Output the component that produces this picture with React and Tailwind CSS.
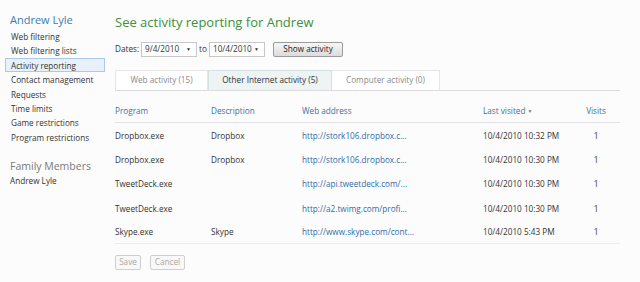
const navItems = [
  'Web filtering',
  'Web filtering lists',
  'Activity reporting',
  'Contact management',
  'Requests',
  'Time limits',
  'Game restrictions',
  'Program restrictions',
]

const rows = [
  { program: 'Dropbox.exe', desc: 'Dropbox', url: 'http://stork106.dropbox.c...', last: '10/4/2010 10:32 PM', visits: 1 },
  { program: 'Dropbox.exe', desc: 'Dropbox', url: 'http://stork106.dropbox.c...', last: '10/4/2010 10:30 PM', visits: 1 },
  { program: 'TweetDeck.exe', desc: '', url: 'http://api.tweetdeck.com/...', last: '10/4/2010 10:30 PM', visits: 1 },
  { program: 'TweetDeck.exe', desc: '', url: 'http://a2.twimg.com/profi...', last: '10/4/2010 10:30 PM', visits: 1 },
  { program: 'Skype.exe', desc: 'Skype', url: 'http://www.skype.com/cont...', last: '10/4/2010 5:43 PM', visits: 1 },
]

function DateSelect({ value, width }) {
  return (
    <div className={`flex items-center justify-between h-[15px] border border-[#c8c8c8] bg-white pl-[3px] pr-[5px] ${width}`}>
      <span>{value}</span>
      <span className="text-[5px] text-[#333]">▼</span>
    </div>
  )
}

export default function App() {
  return (
    <div className="w-[640px] h-[282px] bg-[#fcfcfc] flex text-[8.2px] text-[#333] font-['Open_Sans',sans-serif] overflow-hidden">
      <aside className="w-[105px] shrink-0 pl-[5px] pt-[12px]">
        <div className="text-[11px] text-[#3b7bb5] pl-[5px] leading-[16px]">Andrew Lyle</div>
        <ul className="mt-[1px]">
          {navItems.map((item) => (
            <li key={item}
              className={`h-[14.4px] leading-[13px] pl-[5px] border ${
                item === 'Activity reporting' ? 'bg-[#e8f1fb] border-[#a9c9ea]' : 'border-transparent'
              }`}>
              {item}
            </li>
          ))}
        </ul>
        <div className="mt-[14px] pl-[5px] text-[10.5px] text-[#7a7a7a] leading-[16px]">Family Members</div>
        <div className="mt-[1px] pl-[5px]">Andrew Lyle</div>
      </aside>

      <main className="flex-1 pl-[10px] pt-[12px] pr-[20px]">
        <h1 className="text-[13px] text-[#3f8f3c] leading-[20px]">See activity reporting for Andrew</h1>

        <div className="mt-[10px] flex items-center h-[15px]">
          <span className="w-[26px]">Dates:</span>
          <DateSelect value="9/4/2010" width="w-[56px]" />
          <span className="w-[12px] text-center">to</span>
          <DateSelect value="10/4/2010" width="w-[56px]" />
          <button className="ml-[8px] w-[70px] h-[15px] border border-[#9a9a9a] rounded-[2px] bg-gradient-to-b from-[#f6f6f6] to-[#dcdcdc] text-[#222]">
            Show activity
          </button>
        </div>

        <div className="mt-[13px] flex h-[21px] border-b border-[#dcdcdc]">
          <div className="w-[93px] border border-b-0 border-[#e6e6e6] bg-white flex items-center justify-center text-[#8a8a8a]">Web activity (15)</div>
          <div className="w-[124px] border border-b-0 border-[#d6e0e0] bg-[#eef4f4] flex items-center justify-center text-[#333]">Other Internet activity (5)</div>
          <div className="w-[108px] border border-b-0 border-l-0 border-[#e6e6e6] bg-white flex items-center justify-center text-[#8a8a8a]">Computer activity (0)</div>
        </div>

        <div className="mt-[10px]">
          <div className="flex h-[22px] items-center border-b border-[#e2e2e2] text-[#3d70a6]">
            <div className="w-[96px]">Program</div>
            <div className="w-[91px]">Description</div>
            <div className="w-[181px]">Web address</div>
            <div className="w-[102px]">Last visited <span className="text-[5px] text-[#777] align-middle">▼</span></div>
            <div className="w-[22px] text-center">Visits</div>
          </div>
          {rows.map((r, i) => (
            <div key={i} className={`flex h-[24.2px] pt-[2px] items-center ${i === rows.length - 1 ? 'border-b border-[#ececec]' : ''}`}>
              <div className="w-[96px]">{r.program}</div>
              <div className="w-[91px]">{r.desc}</div>
              <div className="w-[181px] text-[#2f6ca6]">{r.url}</div>
              <div className="w-[102px]">{r.last}</div>
              <div className="w-[22px] text-center">{r.visits}</div>
            </div>
          ))}
        </div>

        <div className="mt-[11px] flex gap-[9px]">
          <button className="w-[26px] h-[15px] border border-[#cfcfcf] rounded-[2px] bg-[#f8f8f8] text-[#a8a8a8]">Save</button>
          <button className="w-[35px] h-[15px] border border-[#cfcfcf] rounded-[2px] bg-[#f8f8f8] text-[#a8a8a8]">Cancel</button>
        </div>
      </main>
    </div>
  )
}
